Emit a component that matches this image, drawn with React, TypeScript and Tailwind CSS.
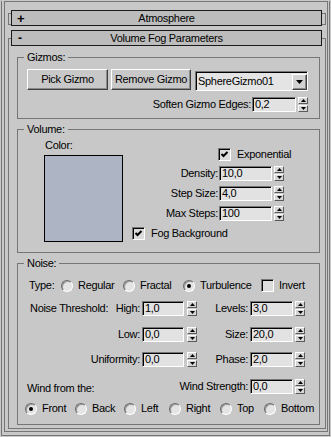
import React from "react";

const LINE = "border-[#767676]";

function Header({ sign, title }: { sign: string; title: string }) {
  return (
    <div className="h-[16px] flex-1 bg-[#bcbcbc] border border-[#1a1a1a] flex items-center">
      <div className="w-[20px] pl-[5px] flex items-center">
        {sign === "+" ? (
          <span className="font-bold text-[13px] leading-[13px]">+</span>
        ) : (
          <span className="font-bold text-[12px] leading-[13px] ml-[1px]">-</span>
        )}
      </div>
      <div className="flex-1 text-center">{title}</div>
      <div className="w-[20px]" />
    </div>
  );
}

function Field({ value, w }: { value: string; w: string }) {
  return (
    <div
      className={`${w} h-[15px] bg-[#e2e2e2] border border-t-[#767676] border-l-[#767676] border-r-white border-b-white shadow-[inset_1px_1px_0_#000] pl-[2px] leading-[13px] whitespace-nowrap`}
    >
      {value}
    </div>
  );
}

function Tri({ up }: { up: boolean }) {
  return (
    <svg width="5" height="3" viewBox="0 0 5 3">
      {up ? <polygon points="2.5,0 5,3 0,3" fill="#000" /> : <polygon points="0,0 5,0 2.5,3" fill="#000" />}
    </svg>
  );
}

function Spin({ ml }: { ml: string }) {
  return (
    <div className={`${ml} w-[10px] h-[15px] flex flex-col justify-between`}>
      <div className="h-[7px] bg-[#d6d6d6] border border-t-white border-l-white border-r-[#5a5a5a] border-b-[#5a5a5a] flex items-center justify-center">
        <Tri up />
      </div>
      <div className="h-[7px] bg-[#d6d6d6] border border-t-white border-l-white border-r-[#5a5a5a] border-b-[#5a5a5a] flex items-center justify-center">
        <Tri up={false} />
      </div>
    </div>
  );
}

function Button({ label, w, cls = "" }: { label: string; w: string; cls?: string }) {
  return (
    <div
      className={`${w} ${cls} h-[21px] bg-[#c8c8c8] border border-t-white border-l-white border-r-[#404040] border-b-[#404040] shadow-[inset_-1px_-1px_0_#8a8a8a] flex items-center justify-center whitespace-nowrap`}
    >
      {label}
    </div>
  );
}

function Check({ checked }: { checked: boolean }) {
  return (
    <div className="w-[13px] h-[13px] shrink-0 bg-[#dcdcdc] border border-t-[#767676] border-l-[#767676] border-r-white border-b-white shadow-[inset_1px_1px_0_#000] flex items-center justify-center">
      {checked && (
        <svg width="9" height="9" viewBox="0 0 9 9">
          <path d="M1.5 4 L3.5 6 L7.5 2" stroke="#000" strokeWidth="2" fill="none" />
        </svg>
      )}
    </div>
  );
}

function Radio({ on }: { on: boolean }) {
  return (
    <div className="w-[12px] h-[12px] shrink-0 rounded-full bg-[#e4e4e4] border border-t-[#6a6a6a] border-l-[#6a6a6a] border-r-white border-b-white shadow-[inset_1px_1px_0_#9a9a9a] flex items-center justify-center">
      {on && <div className="w-[4px] h-[4px] rounded-full bg-black" />}
    </div>
  );
}

function RadioOpt({ label, on, w }: { label: string; on: boolean; w: string }) {
  return (
    <div className={`${w} flex items-center`}>
      <Radio on={on} />
      <span className="ml-[5px] whitespace-nowrap">{label}</span>
    </div>
  );
}

function VolRow({ label, value }: { label: string; value: string }) {
  return (
    <div className="mt-[5px] h-[15px] flex items-center justify-end">
      <span className="mr-[1px] whitespace-nowrap">{label}</span>
      <Field value={value} w="w-[53px]" />
      <Spin ml="ml-[2px]" />
    </div>
  );
}

function NoiseRow({
  mt,
  left,
  lv,
  rl,
  rv,
}: {
  mt: string;
  left: React.ReactNode;
  lv: string;
  rl: string;
  rv: string;
}) {
  return (
    <div className={`${mt} h-[15px] flex items-center`}>
      <div className="w-[113px] flex items-center justify-end">{left}</div>
      <Field value={lv} w="ml-[2px] w-[42px]" />
      <Spin ml="ml-[3px]" />
      <div className="w-[51px] text-right whitespace-nowrap">{rl}</div>
      <Field value={rv} w="ml-[2px] w-[43px]" />
      <Spin ml="ml-[2px]" />
    </div>
  );
}

export default function App() {
  return (
    <div className="w-[331px] h-[437px] bg-[#c8c8c8] text-black text-[11px] leading-[13px] tracking-[-0.3px] font-['Liberation_Sans',Arial,sans-serif] overflow-hidden">
      <div className={`ml-[1px] w-[329px] h-[435px] border-l border-r border-b ${LINE}`}>
        <div className={`ml-[2px] mt-[1px] w-[324px] h-[431px] border ${LINE}`}>
          {/* Atmosphere (closed) */}
          <div className="mt-[8px] ml-[3px] mr-[1px] flex items-start">
            <div className={`mt-[3px] w-[3px] h-[12px] border-l border-t border-b ${LINE}`} />
            <Header sign="+" title="Atmosphere" />
            <div className={`mt-[3px] w-[4px] h-[12px] border-r border-t border-b ${LINE}`} />
          </div>

          {/* Volume Fog Parameters (open) */}
          <div className={`mt-[12px] ml-[3px] mr-[1px] border ${LINE} pb-[3px]`}>
            <div className="-mt-[9px] ml-[2px] mr-[3px] flex">
              <Header sign="-" title="Volume Fog Parameters" />
            </div>

            {/* Gizmos */}
            <fieldset className={`mt-[5px] ml-[8px] mr-[5px] border ${LINE} pl-[9px] pr-[11px] pb-[6px]`}>
              <legend className="ml-[-3px] px-[3px]">Gizmos:</legend>
              <div className="mt-[5px] flex items-start">
                <Button label="Pick Gizmo" w="w-[81px]" />
                <Button label="Remove Gizmo" w="w-[80px]" cls="ml-[3px]" />
                <div className="ml-[4px] mt-[2px] w-[113px] h-[20px] bg-[#e4e4e4] border border-t-[#767676] border-l-[#767676] border-r-white border-b-white shadow-[inset_1px_1px_0_#000] flex items-center">
                  <span className="flex-1 pl-[2px] pt-[1px] whitespace-nowrap">SphereGizmo01</span>
                  <div className="w-[15px] h-[16px] mt-[1px] bg-[#d2d2d2] border border-t-white border-l-white border-r-[#404040] border-b-[#404040] shadow-[inset_-1px_-1px_0_#8a8a8a] flex items-center justify-center">
                    <svg width="7" height="4" viewBox="0 0 7 4">
                      <polygon points="0,0 7,0 3.5,4" fill="#000" />
                    </svg>
                  </div>
                </div>
              </div>
              <div className="mt-[6px] h-[15px] flex items-center justify-end">
                <span className="mr-[1px] whitespace-nowrap">Soften Gizmo Edges:</span>
                <Field value="0,2" w="w-[44px]" />
                <Spin ml="ml-[2px]" />
              </div>
            </fieldset>

            {/* Volume */}
            <fieldset className={`mt-[4px] ml-[8px] mr-[5px] border ${LINE} pl-[9px] pb-[10px]`}>
              <legend className="ml-[-3px] px-[3px]">Volume:</legend>
              <div className="flex">
                <div className="ml-[17px] w-[79px] flex flex-col">
                  <div className="mt-[3px] ml-[1px]">Color:</div>
                  <div className="mt-[3px] w-[79px] h-[87px] border border-black bg-[#adb4c3]" />
                </div>
                <div className="ml-[9px] w-[152px] flex flex-col">
                  <div className="mt-[12px] ml-[86px] flex items-center">
                    <Check checked />
                    <span className="ml-[6px] whitespace-nowrap">Exponential</span>
                  </div>
                  <VolRow label="Density:" value="10,0" />
                  <VolRow label="Step Size:" value="4,0" />
                  <VolRow label="Max Steps:" value="100" />
                  <div className="mt-[6px] flex items-center">
                    <Check checked />
                    <span className="ml-[6px] whitespace-nowrap">Fog Background</span>
                  </div>
                </div>
              </div>
            </fieldset>

            {/* Noise */}
            <fieldset className={`mt-[4px] ml-[8px] mr-[5px] border ${LINE} pl-[9px] pb-[9px]`}>
              <legend className="ml-[-3px] px-[3px]">Noise:</legend>
              <div className="mt-[9px] h-[13px] flex items-center">
                <div className="ml-[2px] w-[32px]">Type:</div>
                <RadioOpt label="Regular" on={false} w="w-[62px]" />
                <RadioOpt label="Fractal" on={false} w="w-[60px]" />
                <RadioOpt label="Turbulence" on w="w-[78px]" />
                <div className="flex items-center">
                  <Check checked={false} />
                  <span className="ml-[5px]">Invert</span>
                </div>
              </div>
              <NoiseRow
                mt="mt-[9px]"
                left={
                  <div className="w-full flex justify-between">
                    <span className="ml-[3px] whitespace-nowrap">Noise Threshold:</span>
                    <span>High:</span>
                  </div>
                }
                lv="1,0"
                rl="Levels:"
                rv="3,0"
              />
              <NoiseRow mt="mt-[11px]" left={<span>Low:</span>} lv="0,0" rl="Size:" rv="20,0" />
              <NoiseRow mt="mt-[10px]" left={<span>Uniformity:</span>} lv="0,0" rl="Phase:" rv="2,0" />
              <div className="mt-[12px] h-[15px] flex items-start">
                <div className="w-[100px] mt-[3px] whitespace-nowrap">Wind from the:</div>
                <div className="w-[121px] text-right mt-[1px] whitespace-nowrap">Wind Strength:</div>
                <Field value="0,0" w="ml-[2px] w-[43px]" />
                <Spin ml="ml-[2px]" />
              </div>
              <div className="mt-[8px] h-[13px] ml-[-2px] flex items-center">
                <RadioOpt label="Front" on w="w-[50px]" />
                <RadioOpt label="Back" on={false} w="w-[49px]" />
                <RadioOpt label="Left" on={false} w="w-[45px]" />
                <RadioOpt label="Right" on={false} w="w-[51px]" />
                <RadioOpt label="Top" on={false} w="w-[44px]" />
                <RadioOpt label="Bottom" on={false} w="w-[50px]" />
              </div>
            </fieldset>
          </div>
        </div>
      </div>
    </div>
  );
}
